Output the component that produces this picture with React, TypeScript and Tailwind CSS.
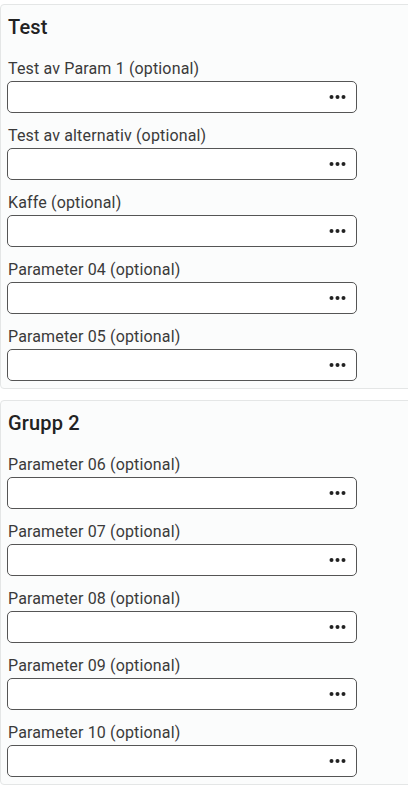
import React from "react";

const groups = [
  {
    title: "Test",
    params: [
      "Test av Param 1 (optional)",
      "Test av alternativ (optional)",
      "Kaffe (optional)",
      "Parameter 04 (optional)",
      "Parameter 05 (optional)",
    ],
  },
  {
    title: "Grupp 2",
    params: [
      "Parameter 06 (optional)",
      "Parameter 07 (optional)",
      "Parameter 08 (optional)",
      "Parameter 09 (optional)",
      "Parameter 10 (optional)",
    ],
  },
];

function Dots() {
  return (
    <svg width="18" height="6" viewBox="0 0 18 6" className="shrink-0">
      <circle cx="2.5" cy="3" r="2" fill="#222" />
      <circle cx="8.5" cy="3" r="2" fill="#222" />
      <circle cx="14.5" cy="3" r="2" fill="#222" />
    </svg>
  );
}

function Field({ label }: { label: string }) {
  return (
    <div className="flex flex-col mb-[11px] last:mb-0">
      <div className="text-[16px] leading-[24px] tracking-[0.15px] text-[#3a3a3a] pl-px">{label}</div>
      <div className="w-[350px] h-[32px] border border-[#555] rounded-[5px] bg-white flex items-center justify-end pr-[9px]">
        <Dots />
      </div>
    </div>
  );
}

export default function App() {
  return (
    <div
      className="w-[408px] h-[787px] overflow-hidden bg-white pt-[4px]"
      style={{ fontFamily: "Roboto, 'Noto Sans', sans-serif" }}
    >
      <div className="flex flex-col gap-[11px] w-[420px]">
        {groups.map((g) => (
          <div
            key={g.title}
            className="border border-[#e4e6e6] rounded-[4px] bg-[#fbfcfc] pl-[6px] pt-[8px] pb-[7px]"
          >
            <div className="text-[20px] leading-[28px] font-medium tracking-[0.15px] text-[#222] pl-px mb-[16px]">
              {g.title}
            </div>
            {g.params.map((p) => (
              <Field key={p} label={p} />
            ))}
          </div>
        ))}
      </div>
    </div>
  );
}
